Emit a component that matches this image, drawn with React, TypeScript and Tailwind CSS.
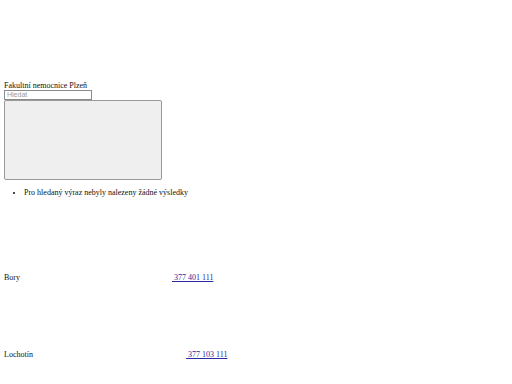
export default function App() {
  return (
    <div className="w-[512px] h-[384px] bg-white text-[#111] text-[8px] leading-[10px] overflow-hidden font-['Liberation_Serif',serif]">
      <div className="px-[4px] pt-[81px]">
        <div className="leading-[9px]">Fakultní nemocnice Plzeň</div>
        <input
          className="block w-[88px] h-[10px] border border-[#8a8a8a] px-[2px] text-[7px] placeholder:text-[#999] outline-none font-['Liberation_Sans',sans-serif]"
          placeholder="Hledat"
        />
        <div className="w-[158px] h-[80px] bg-[#efefef] border border-[#999] rounded-[2px]" />
        <ul className="list-disc pl-[20px] mt-[8px]">
          <li>Pro hledaný výraz nebyly nalezeny žádné výsledky</li>
        </ul>
        <div className="flex mt-[75px]">
          <div className="w-[168px]">Bory</div>
          <a href="#" className="underline text-[#2a2aa0]">&nbsp;377 401 111</a>
        </div>
        <div className="flex mt-[67px]">
          <div className="w-[182px]">Lochotín</div>
          <a href="#" className="underline text-[#2a2aa0]">&nbsp;377 103 111</a>
        </div>
      </div>
    </div>
  );
}
